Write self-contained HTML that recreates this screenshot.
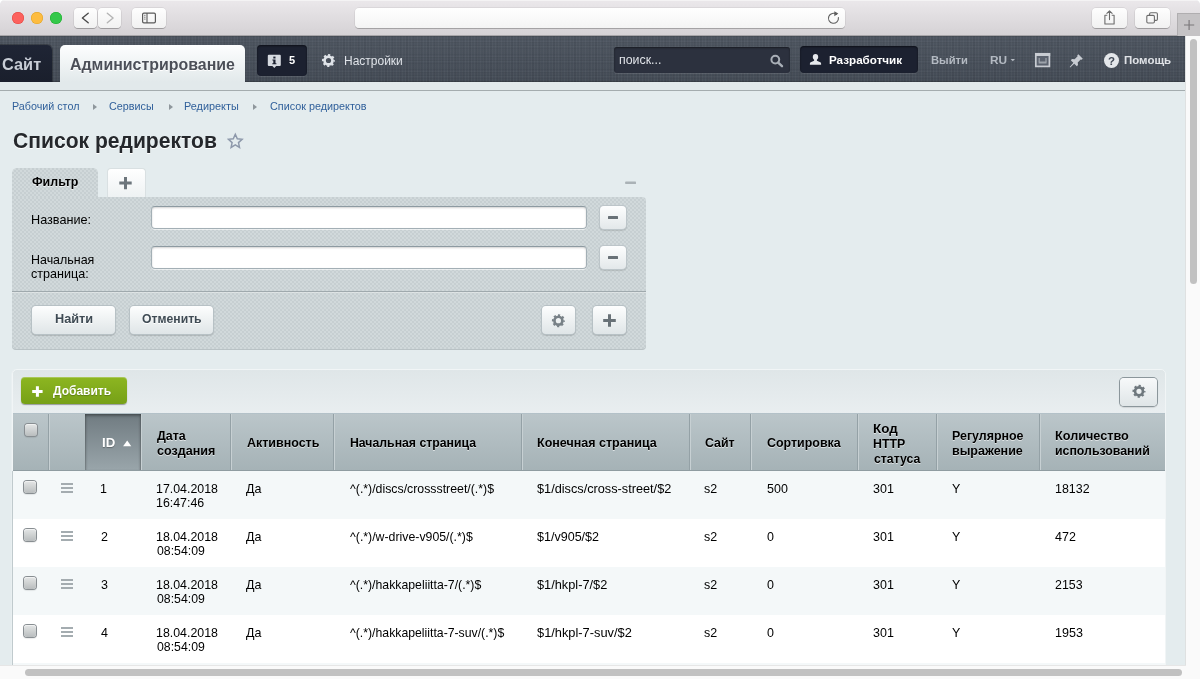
<!DOCTYPE html>
<html lang="ru">
<head>
<meta charset="utf-8">
<title>Список редиректов</title>
<style>
*{box-sizing:border-box;margin:0;padding:0}
html,body{width:1200px;height:679px;overflow:hidden;background:#fff}
body{position:relative;font-family:"Liberation Sans",sans-serif;font-size:13px;color:#000}
#win{will-change:transform;position:absolute;left:0;top:0;width:1200px;height:679px;overflow:hidden;border-radius:5px 5px 0 0;background:#e4ecee}
.t{position:absolute;white-space:nowrap;transform-origin:0 50%;display:block}
svg{position:absolute;overflow:visible}
/* ---------- browser chrome ---------- */
#chrome{position:absolute;left:0;top:0;width:1200px;height:36px;background:linear-gradient(#ebe8eb,#d5d2d5);border-bottom:1px solid #a7a5a8;box-shadow:inset 0 1px 0 #f4f3f4}
.dot{position:absolute;top:12px;width:12px;height:12px;border-radius:50%}
.cbtn{position:absolute;top:8px;height:20px;background:linear-gradient(#fefefe,#f1f1f1);border-radius:4px;box-shadow:0 0 0 .5px rgba(0,0,0,.12),0 1px 0 rgba(0,0,0,.22)}
#url{position:absolute;left:355px;top:8px;width:490px;height:20px;background:linear-gradient(#fff,#f4f4f4);border-radius:4px;box-shadow:0 0 0 .5px rgba(0,0,0,.1),0 1px 0 rgba(0,0,0,.2)}
#newtab{position:absolute;left:1177px;top:13px;width:23px;height:23px;background:#c5c3c5;border-left:1px solid #b0aeb0;border-top:1px solid #b0aeb0}
/* ---------- admin header ---------- */
#hdr{position:absolute;left:0;top:36px;width:1185px;height:46px;background-color:#48505b;background-image:repeating-linear-gradient(0deg,rgba(0,0,0,.04) 0,rgba(0,0,0,.04) 1px,transparent 1px,transparent 3px),repeating-linear-gradient(90deg,rgba(255,255,255,.03) 0,rgba(255,255,255,.03) 1px,transparent 1px,transparent 3px),repeating-linear-gradient(90deg,rgba(0,0,0,.035) 0,rgba(0,0,0,.035) 2px,transparent 2px,transparent 7px),repeating-linear-gradient(0deg,rgba(255,255,255,.025) 0,rgba(255,255,255,.025) 1px,transparent 1px,transparent 5px),linear-gradient(rgba(255,255,255,.03),rgba(0,0,0,.06));box-shadow:inset 0 1px 0 rgba(0,0,0,.1),inset 0 -1px 1px rgba(0,0,0,.22)}
#strip{z-index:1;position:absolute;left:0;top:82px;width:1185px;height:9px;background:#e2e9eb;border-bottom:1px solid #a4acae}
#tab-site{position:absolute;left:-5px;top:45px;width:57px;height:37px;background:linear-gradient(#1f2535,#1a1f2c);border-radius:5px 5px 0 0;box-shadow:0 0 0 1px rgba(0,0,0,.25)}
#tab-admin{position:absolute;left:60px;top:45px;width:185px;height:37px;background:linear-gradient(#fdfefe,#e2e9eb);border-radius:5px 5px 0 0}
#notif{position:absolute;left:257px;top:45px;width:50px;height:31px;background:#1c2130;border-radius:4px;box-shadow:0 1px 0 rgba(255,255,255,.08),inset 0 1px 2px rgba(0,0,0,.5)}
#search{position:absolute;left:614px;top:47px;width:176px;height:26px;background:#2c313e;border-radius:3px;box-shadow:0 1px 0 rgba(255,255,255,.1),inset 0 1px 2px rgba(0,0,0,.45)}
#user{position:absolute;left:800px;top:46px;width:118px;height:27px;background:#1c2130;border-radius:4px;box-shadow:0 1px 0 rgba(255,255,255,.08),inset 0 1px 2px rgba(0,0,0,.5)}
/* ---------- scrollbars ---------- */
#vscroll{position:absolute;left:1185px;top:36px;width:15px;height:643px;background:#fafafa;border-left:1px solid #dfe1e1}
#vthumb{position:absolute;left:1190px;top:39px;width:7px;height:245px;border-radius:4px;background:#c1c1c1}
#hscroll{position:absolute;left:0;top:665px;width:1186px;height:14px;background:#fafafa;border-top:1px solid #e6e6e6}
#hthumb{position:absolute;left:25px;top:669px;width:1157px;height:7px;border-radius:4px;background:#c1c1c1}
#corner{position:absolute;left:1186px;top:665px;width:15px;height:15px;background:#fafafa}
/* ---------- page ---------- */
.carr{position:absolute;top:104px;width:0;height:0;border-left:4px solid #8f979c;border-top:3.5px solid transparent;border-bottom:3.5px solid transparent}
/* filter */
.dots{background-color:#d1d9db;background-image:radial-gradient(circle at 1px 1px,rgba(110,125,130,.16) .5px,transparent 1.1px),radial-gradient(circle at 3px 3px,rgba(110,125,130,.16) .5px,transparent 1.1px);background-size:4px 4px}
#ftab{position:absolute;left:12px;top:168px;width:86px;height:30px;border-radius:5px 5px 0 0}
#fplus{position:absolute;left:106.5px;top:168px;width:39px;height:29px;background:linear-gradient(#fff,#eef2f3);border-radius:4px 4px 0 0;border:1px solid #d9e0e2;border-bottom:none}
#fbox{position:absolute;left:12px;top:197px;width:634px;height:152px;border-radius:0 4px 4px 4px;box-shadow:0 1px 0 #b9c2c5}
#fsep{position:absolute;left:12px;top:291px;width:634px;height:1px;background:#9fa9ad}
#fsep2{position:absolute;left:12px;top:292px;width:634px;height:1px;background:rgba(255,255,255,.35)}
.finput{position:absolute;left:151px;width:436px;height:23px;background:#fff;border:1px solid #a3afb5;border-top-color:#8d9aa1;border-radius:4px;box-shadow:inset 0 1px 2px rgba(0,0,0,.18),0 1px 0 rgba(255,255,255,.6)}
.fminus{position:absolute;left:600px;width:26px;height:23px;background:linear-gradient(#fdfefe,#e3e8ea);border-radius:4px;box-shadow:0 0 0 1px #bcc5c9,0 1px 1px 1px rgba(0,0,0,.12)}
.fminus i{position:absolute;left:8px;top:10px;width:10px;height:3px;background:#687177;border-radius:.5px}
.btn{position:absolute;top:306px;height:28px;background:linear-gradient(#fdfefe,#dfe5e7);border-radius:4px;box-shadow:0 0 0 1px #b7c1c5,0 1px 1px 1px rgba(0,0,0,.14)}
/* grid */
#gwrap{position:absolute;left:12px;top:369px;width:1154px;height:320px;background:linear-gradient(#dfe6e8,#e9eef0 44px);border-radius:5px 5px 0 0;border:1px solid #f1f5f6;box-shadow:-.5px 0 0 #eef2f3}
#addbtn{position:absolute;left:21px;top:377px;width:106px;height:27px;background:linear-gradient(#8db621,#76a017);border-radius:4px;box-shadow:0 1px 1px rgba(0,0,0,.35),inset 0 1px 0 rgba(255,255,255,.25)}
#gset{position:absolute;left:1120px;top:378px;width:37px;height:28px;background:linear-gradient(#f7f9fa,#dfe5e7);border-radius:4px;box-shadow:0 0 0 1px #8b969b,0 1px 1px 1px rgba(0,0,0,.1)}
#thead{position:absolute;left:13px;top:413px;width:1152px;height:58px;background:linear-gradient(#bbc6ca,#a5b2b6);box-shadow:inset 0 1px 0 #b3c1c8}
.vs{position:absolute;top:414px;width:2px;height:57px;background:linear-gradient(90deg,#94a1a6 50%,#c7d0d3 50%)}
#thid{position:absolute;left:85px;top:414px;width:56px;height:57px;background:linear-gradient(#707b81,#9aa6ab);box-shadow:inset 0 2px 3px rgba(0,0,0,.3),inset 1px 0 2px rgba(0,0,0,.15),inset -1px 0 2px rgba(0,0,0,.15)}
#thline{position:absolute;left:13px;top:470px;width:1152px;height:1px;background:#8f9ca1}
.row{position:absolute;left:13px;width:1152px;height:48px}
.row.odd{background:#f4f8f9}
.row.even{background:#fff}
.cb{position:absolute;width:12px;height:12px;border-radius:3px;background:linear-gradient(#e4e6e6,#b9bdbe);box-shadow:0 0 0 1px #888e92,0 1px 1px 1px rgba(0,0,0,.08),inset 0 1px 0 rgba(255,255,255,.5)}
.ham{position:absolute;left:61px;width:12px;height:10px;background:linear-gradient(#a4acb0 2px,transparent 2px,transparent 4px,#a4acb0 4px,#a4acb0 6px,transparent 6px,transparent 8px,#a4acb0 8px)}
</style>
</head>
<body>
<div id="win">
<div id="chrome">
  <div class="dot" style="left:12px;background:#fc615d;box-shadow:inset 0 0 0 .5px #e0443e"></div>
  <div class="dot" style="left:31px;background:#fdbc40;box-shadow:inset 0 0 0 .5px #dea123"></div>
  <div class="dot" style="left:50px;background:#34c84a;box-shadow:inset 0 0 0 .5px #1aab29"></div>
  <div class="cbtn" style="left:74px;width:23px"></div>
  <div class="cbtn" style="left:98px;width:23px"></div>
  <div class="cbtn" style="left:132px;width:34px"></div>
  <div id="url"></div>
  <div class="cbtn" style="left:1092px;width:35px"></div>
  <div class="cbtn" style="left:1135px;width:35px"></div>
  <div id="newtab"></div>
  <svg style="left:0;top:0" width="1200" height="36" viewBox="0 0 1200 36" fill="none">
<path d="M88.2 13.3 L82.4 18 L88.2 22.7" stroke="#4a4a4a" stroke-width="1.4" stroke-linecap="round" stroke-linejoin="round"/>
<path d="M107.3 13.3 L113.1 18 L107.3 22.7" stroke="#b4b4b4" stroke-width="1.4" stroke-linecap="round" stroke-linejoin="round"/>
<rect x="142.6" y="13.1" width="12.8" height="9.8" rx="1.3" stroke="#5a5a5a" stroke-width="1.2"/>
<path d="M147 13.1 V22.9" stroke="#5a5a5a" stroke-width="1.1"/>
<path d="M144 15.3h1.6M144 17.2h1.6M144 19.1h1.6" stroke="#6a6a6a" stroke-width=".8"/>
<path d="M836.6 14.4 A5 5 0 1 0 838.4 17.6" stroke="#5e5e5e" stroke-width="1.1" stroke-linecap="round"/>
<path d="M834.3 11.2 L838.3 13.6 L834.3 16.2 Z" fill="#5e5e5e"/>
<path d="M1107.3 15.2 H1104.9 V24 H1114.1 V15.2 H1111.7" stroke="#6b6b6b" stroke-width="1.1" stroke-linejoin="round"/>
<path d="M1109.5 11 V19.6 M1106.9 13.4 L1109.5 10.8 L1112.1 13.4" stroke="#6b6b6b" stroke-width="1.1" stroke-linecap="round" stroke-linejoin="round"/>
<rect x="1146.8" y="15.4" width="7.6" height="7.6" rx="1.2" stroke="#6b6b6b" stroke-width="1.1"/>
<path d="M1149.6 15.2 V13.9 Q1149.6 12.7 1150.8 12.7 H1156.2 Q1157.4 12.7 1157.4 13.9 V19.2 Q1157.4 20.4 1156.2 20.4 H1154.6" stroke="#6b6b6b" stroke-width="1.1"/>
<path d="M1184 25 H1194.2 M1189.1 19.9 V30.1" stroke="#7b797b" stroke-width="1.2"/>
</svg>

</div>
<div id="hdr"></div>
<div id="strip"></div>
<div id="tab-site"></div>
<div id="tab-admin"></div>
<div id="notif"></div>
<div id="search"></div>
<div id="user"></div>
<svg style="left:0;top:36px" width="1186" height="46" viewBox="0 36 1186 46">
<!-- notification -->
<path d="M268.8 54.8 H279.8 Q280.8 54.8 280.8 55.8 V65 Q280.8 66 279.8 66 H276.2 L274.3 67.9 L272.4 66 H268.8 Q267.8 66 267.8 65 V55.8 Q267.8 54.8 268.8 54.8 Z" fill="#d6dae0"/>
<rect x="273.3" y="56.6" width="2.2" height="1.9" fill="#1c2130"/>
<path d="M272.4 59.6 H275.5 V63.3 H276.4 V64.3 H272.3 V63.3 H273.3 V60.6 H272.4 Z" fill="#1c2130"/>
<!-- gear -->
<g transform="translate(328.5 60.5) scale(1.0)" fill="none" stroke="#dfe3e8"><circle r="3.95" stroke-width="2.7"/><circle r="5.55" stroke-width="1.9" stroke-dasharray="2.18 2.18" stroke-dashoffset="1.09" stroke-linecap="butt"/></g>
<!-- magnifier -->
<circle cx="775.3" cy="59.6" r="3.9" fill="none" stroke="#a9afb7" stroke-width="2"/>
<path d="M778.2 62.6 L782 66.2" stroke="#a9afb7" stroke-width="2.4" stroke-linecap="round"/>
<!-- user -->
<path d="M815.5 54 a2.7 2.9 0 0 1 2.7 2.9 c0 1.3 -.7 2.2 -1.3 2.8 v1 l3.4 1.6 q.8 .4 .8 1.3 v1.1 h-11.2 v-1.1 q0 -.9 .8 -1.3 l3.4 -1.6 v-1 c-.6 -.6 -1.3 -1.5 -1.3 -2.8 a2.7 2.9 0 0 1 2.7 -2.9 Z" fill="#e6e8ec"/>
<!-- RU arrow -->
<path d="M1010.6 59 h4.4 l-2.2 2.3 Z" fill="#b4bac2"/>
<!-- window icon -->
<rect x="1035.8" y="53.8" width="13.6" height="12.6" fill="#5b626e" stroke="#c8ccd2" stroke-width="1.7"/>
<rect x="1035" y="53" width="15.2" height="3" fill="#c8ccd2"/>
<rect x="1038.6" y="61.5" width="8" height="2" fill="#9da3ab"/>
<rect x="1038.6" y="58" width="1.2" height="4" fill="#9da3ab"/><rect x="1045.4" y="58" width="1.2" height="4" fill="#9da3ab"/>
<!-- pin -->
<g fill="#c8ccd2"><path d="M1078.4 54.3 l4.4 4.4 -1.2 1.1 -.9 -.4 -3 3 .3 2.6 -1.2 1.2 -6 -6 1.2 -1.2 2.6 .3 3 -3 -.4 -.9 Z"/><path d="M1073.6 62.6 l.9 .9 -4.3 3.9 -.5 -.5 Z"/></g>
<!-- help -->
<circle cx="1111.5" cy="60.5" r="7.5" fill="#e4e7ea"/>
<text x="1111.5" y="64.6" text-anchor="middle" font-family="Liberation Sans, sans-serif" font-weight="bold" font-size="11.5" fill="#414955">?</text>
</svg>


<div class="carr" style="left:93px"></div>
<div class="carr" style="left:168.5px"></div>
<div class="carr" style="left:253px"></div>

<div id="ftab" class="dots"></div>
<div id="fplus"></div>
<div id="fbox" class="dots"></div>
<div id="fsep"></div><div id="fsep2"></div>
<div class="finput" style="top:206px"></div>
<div class="fminus" style="top:206px"><i></i></div>
<div class="finput" style="top:246px"></div>
<div class="fminus" style="top:246px"><i></i></div>
<div class="btn" style="left:32px;width:83px"></div>
<div class="btn" style="left:130px;width:83px"></div>
<div class="btn" style="left:542px;width:33px"></div>
<div class="btn" style="left:593px;width:33px"></div>

<div id="gwrap"></div>
<div id="addbtn"></div>
<div id="gset"></div>
<div id="thead"></div>
<div class="vs" style="left:48px"></div>
<div class="vs" style="left:85px"></div>
<div class="vs" style="left:140px"></div>
<div class="vs" style="left:230px"></div>
<div class="vs" style="left:333px"></div>
<div class="vs" style="left:521px"></div>
<div class="vs" style="left:689px"></div>
<div class="vs" style="left:750px"></div>
<div class="vs" style="left:857px"></div>
<div class="vs" style="left:936px"></div>
<div class="vs" style="left:1039px"></div>
<div class="cb" style="left:24.5px;top:424px"></div>
<div class="row odd" style="top:471px"></div>
<div class="cb" style="left:24px;top:481.3px"></div><div class="ham" style="top:483px"></div>
<div class="row even" style="top:519px"></div>
<div class="cb" style="left:24px;top:529.3px"></div><div class="ham" style="top:531px"></div>
<div class="row odd" style="top:567px"></div>
<div class="cb" style="left:24px;top:577.3px"></div><div class="ham" style="top:579px"></div>
<div class="row even" style="top:615px"></div>
<div class="cb" style="left:24px;top:625.3px"></div><div class="ham" style="top:627px"></div>
<div class="row odd" style="top:663px;height:16px"></div>
<div style="position:absolute;left:12px;top:471px;width:1px;height:200px;background:#c0cacd"></div>
<div id="thid"></div>
<div id="thline"></div>
<svg style="left:0;top:90px" width="1186" height="400" viewBox="0 90 1186 400">
<!-- star -->
<path d="M235.3 134.3 l2 4.5 4.8 .5 -3.6 3.3 1 4.8 -4.2 -2.5 -4.2 2.5 1 -4.8 -3.6 -3.3 4.8 -.5 Z" fill="none" stroke="#8e99ab" stroke-width="1.5" stroke-linejoin="miter"/>
<!-- filter tab plus -->
<path d="M119.3 183.1 h12.4 M125.5 176.9 v12.4" stroke="#6c757b" stroke-width="3"/>
<!-- collapse -->
<rect x="625.2" y="181.6" width="10.8" height="2.4" rx=".6" fill="#aab2b6"/>
<!-- filter gear -->
<g transform="translate(558.4 320.7) scale(1.0)" fill="none" stroke="#788187"><circle r="3.95" stroke-width="2.7"/><circle r="5.55" stroke-width="1.9" stroke-dasharray="2.18 2.18" stroke-dashoffset="1.09" stroke-linecap="butt"/></g>
<!-- filter plus btn -->
<path d="M603.2 320.5 h12.6 M609.5 314.2 v12.6" stroke="#687177" stroke-width="3"/>
<!-- add plus -->
<path d="M32.2 391.5 h10.4 M37.4 386.3 v10.4" stroke="#fff" stroke-width="3"/>
<!-- grid settings gear -->
<g transform="translate(1139 391.3) scale(1.0)" fill="none" stroke="#6f787e"><circle r="3.95" stroke-width="2.7"/><circle r="5.55" stroke-width="1.9" stroke-dasharray="2.18 2.18" stroke-dashoffset="1.09" stroke-linecap="butt"/></g>
<!-- sort triangle -->
<path d="M123.1 446.2 h8.2 l-4.1 -5.7 Z" fill="#fff"/>
</svg>

<span class="t" style="left:1.83px;top:54.08px;font-size:16.5px;line-height:20px;font-weight:bold;color:#c8cdd6;transform:scaleX(0.9901)">Сайт</span>
<span class="t" style="left:70.10px;top:54.08px;font-size:16.5px;line-height:20px;font-weight:bold;color:#4b4f58;text-shadow:0 1px 0 #fff;transform:scaleX(0.9653)">Администрирование</span>
<span class="t" style="left:289.16px;top:53.99px;font-size:11px;line-height:13px;font-weight:bold;color:#fff;transform:scaleX(1.0049)">5</span>
<span class="t" style="left:344.02px;top:54.04px;font-size:12px;line-height:14px;color:#dfe3e8;transform:scaleX(0.9996)">Настройки</span>
<span class="t" style="left:618.84px;top:53.14px;font-size:12px;line-height:14px;color:#e0e3e8;transform:scaleX(1.0300)">поиск...</span>
<span class="t" style="left:828.92px;top:53.32px;font-size:11.5px;line-height:14px;font-weight:bold;color:#fff;transform:scaleX(1.0126)">Разработчик</span>
<span class="t" style="left:931.25px;top:53.32px;font-size:11.5px;line-height:14px;font-weight:bold;color:#b4bac2;transform:scaleX(0.9771)">Выйти</span>
<span class="t" style="left:990.21px;top:53.32px;font-size:11.5px;line-height:14px;font-weight:bold;color:#b4bac2;transform:scaleX(1.0300)">RU</span>
<span class="t" style="left:1124.03px;top:53.32px;font-size:11.5px;line-height:14px;font-weight:bold;color:#dfe2e6;transform:scaleX(0.9969)">Помощь</span>
<span class="t" style="left:11.72px;top:100.29px;font-size:11px;line-height:13px;color:#2f5f9a;transform:scaleX(0.9765)">Рабочий стол</span>
<span class="t" style="left:109.45px;top:100.29px;font-size:11px;line-height:13px;color:#2f5f9a;transform:scaleX(0.9807)">Сервисы</span>
<span class="t" style="left:184.41px;top:100.29px;font-size:11px;line-height:13px;color:#2f5f9a;transform:scaleX(0.9880)">Редиректы</span>
<span class="t" style="left:269.95px;top:100.29px;font-size:11px;line-height:13px;color:#2f5f9a;transform:scaleX(0.9823)">Список редиректов</span>
<span class="t" style="left:12.54px;top:127.88px;font-size:22px;line-height:26px;font-weight:bold;color:#25282c;text-shadow:0 1px 0 #fff;transform:scaleX(0.9582)">Список редиректов</span>
<span class="t" style="left:32.07px;top:174.20px;font-size:13px;line-height:16px;font-weight:bold;color:#000;text-shadow:0 1px 0 rgba(255,255,255,.7);transform:scaleX(0.9575)">Фильтр</span>
<span class="t" style="left:30.66px;top:211.70px;font-size:13px;line-height:16px;color:#000;transform:scaleX(0.9722)">Название:</span>
<span class="t" style="left:30.58px;top:251.50px;font-size:13px;line-height:16px;color:#000;transform:scaleX(0.9568)">Начальная</span>
<span class="t" style="left:31.07px;top:265.50px;font-size:13px;line-height:16px;color:#000;transform:scaleX(0.9671)">страница:</span>
<span class="t" style="left:54.75px;top:310.50px;font-size:13px;line-height:16px;font-weight:bold;color:#3f4b54;text-shadow:0 1px 0 #fff;transform:scaleX(0.9786)">Найти</span>
<span class="t" style="left:141.50px;top:310.50px;font-size:13px;line-height:16px;font-weight:bold;color:#3f4b54;text-shadow:0 1px 0 #fff;transform:scaleX(0.9383)">Отменить</span>
<span class="t" style="left:53.19px;top:382.50px;font-size:13px;line-height:16px;font-weight:bold;color:#fff;text-shadow:0 1px 1px rgba(0,0,0,.25);transform:scaleX(0.9228)">Добавить</span>
<span class="t" style="left:101.61px;top:434.60px;font-size:13px;line-height:16px;font-weight:bold;color:#fff;text-shadow:0 1px 1px rgba(0,0,0,.3);transform:scaleX(1.0186)">ID</span>
<span class="t" style="left:157.39px;top:428.25px;font-size:13px;line-height:16px;font-weight:bold;color:#000;text-shadow:0 1px 0 rgba(255,255,255,.6);transform:scaleX(0.9565)">Дата</span>
<span class="t" style="left:157.01px;top:443.25px;font-size:13px;line-height:16px;font-weight:bold;color:#000;text-shadow:0 1px 0 rgba(255,255,255,.6);transform:scaleX(0.9668)">создания</span>
<span class="t" style="left:246.69px;top:435.00px;font-size:13px;line-height:16px;font-weight:bold;color:#000;text-shadow:0 1px 0 rgba(255,255,255,.6);transform:scaleX(0.9586)">Активность</span>
<span class="t" style="left:350.18px;top:435.00px;font-size:13px;line-height:16px;font-weight:bold;color:#000;text-shadow:0 1px 0 rgba(255,255,255,.6);transform:scaleX(0.9431)">Начальная страница</span>
<span class="t" style="left:537.16px;top:435.00px;font-size:13px;line-height:16px;font-weight:bold;color:#000;text-shadow:0 1px 0 rgba(255,255,255,.6);transform:scaleX(0.9623)">Конечная страница</span>
<span class="t" style="left:705.24px;top:435.00px;font-size:13px;line-height:16px;font-weight:bold;color:#000;text-shadow:0 1px 0 rgba(255,255,255,.6);transform:scaleX(0.9507)">Сайт</span>
<span class="t" style="left:766.99px;top:435.00px;font-size:13px;line-height:16px;font-weight:bold;color:#000;text-shadow:0 1px 0 rgba(255,255,255,.6);transform:scaleX(0.9561)">Сортировка</span>
<span class="t" style="left:872.85px;top:420.75px;font-size:13px;line-height:16px;font-weight:bold;color:#000;text-shadow:0 1px 0 rgba(255,255,255,.6);transform:scaleX(1.0300)">Код</span>
<span class="t" style="left:873.17px;top:436.00px;font-size:13px;line-height:16px;font-weight:bold;color:#000;text-shadow:0 1px 0 rgba(255,255,255,.6);transform:scaleX(0.9501)">HTTP</span>
<span class="t" style="left:873.52px;top:451.00px;font-size:13px;line-height:16px;font-weight:bold;color:#000;text-shadow:0 1px 0 rgba(255,255,255,.6);transform:scaleX(0.9462)">статуса</span>
<span class="t" style="left:952.17px;top:428.25px;font-size:13px;line-height:16px;font-weight:bold;color:#000;text-shadow:0 1px 0 rgba(255,255,255,.6);transform:scaleX(0.9552)">Регулярное</span>
<span class="t" style="left:952.13px;top:443.25px;font-size:13px;line-height:16px;font-weight:bold;color:#000;text-shadow:0 1px 0 rgba(255,255,255,.6);transform:scaleX(0.9618)">выражение</span>
<span class="t" style="left:1055.40px;top:428.25px;font-size:13px;line-height:16px;font-weight:bold;color:#000;text-shadow:0 1px 0 rgba(255,255,255,.6);transform:scaleX(0.9746)">Количество</span>
<span class="t" style="left:1055.40px;top:443.25px;font-size:13px;line-height:16px;font-weight:bold;color:#000;text-shadow:0 1px 0 rgba(255,255,255,.6);transform:scaleX(0.9480)">использований</span>
<span class="t" style="left:100.35px;top:480.50px;font-size:13px;line-height:16px;color:#000;transform:scaleX(0.9600)">1</span>
<span class="t" style="left:156.06px;top:480.50px;font-size:13px;line-height:16px;color:#000;transform:scaleX(0.9526)">17.04.2018</span>
<span class="t" style="left:156.06px;top:494.50px;font-size:13px;line-height:16px;color:#000;transform:scaleX(0.9533)">16:47:46</span>
<span class="t" style="left:246.16px;top:480.50px;font-size:13px;line-height:16px;color:#000;transform:scaleX(0.9600)">Да</span>
<span class="t" style="left:349.94px;top:480.50px;font-size:13px;line-height:16px;color:#000;transform:scaleX(0.9473)">^(.*)/discs/crossstreet/(.*)$</span>
<span class="t" style="left:536.86px;top:480.50px;font-size:13px;line-height:16px;color:#000;transform:scaleX(0.9782)">$1/discs/cross-street/$2</span>
<span class="t" style="left:704.15px;top:480.50px;font-size:13px;line-height:16px;color:#000;transform:scaleX(0.9600)">s2</span>
<span class="t" style="left:766.50px;top:480.50px;font-size:13px;line-height:16px;color:#000;transform:scaleX(0.9600)">500</span>
<span class="t" style="left:872.52px;top:480.50px;font-size:13px;line-height:16px;color:#000;transform:scaleX(0.9600)">301</span>
<span class="t" style="left:951.73px;top:480.50px;font-size:13px;line-height:16px;color:#000;transform:scaleX(0.9600)">Y</span>
<span class="t" style="left:1054.75px;top:480.50px;font-size:13px;line-height:16px;color:#000;transform:scaleX(0.9564)">18132</span>
<span class="t" style="left:100.67px;top:528.50px;font-size:13px;line-height:16px;color:#000;transform:scaleX(0.9600)">2</span>
<span class="t" style="left:156.06px;top:528.50px;font-size:13px;line-height:16px;color:#000;transform:scaleX(0.9526)">18.04.2018</span>
<span class="t" style="left:156.52px;top:542.50px;font-size:13px;line-height:16px;color:#000;transform:scaleX(0.9448)">08:54:09</span>
<span class="t" style="left:246.16px;top:528.50px;font-size:13px;line-height:16px;color:#000;transform:scaleX(0.9600)">Да</span>
<span class="t" style="left:349.94px;top:528.50px;font-size:13px;line-height:16px;color:#000;transform:scaleX(0.9470)">^(.*)/w-drive-v905/(.*)$</span>
<span class="t" style="left:536.87px;top:528.50px;font-size:13px;line-height:16px;color:#000;transform:scaleX(0.9640)">$1/v905/$2</span>
<span class="t" style="left:704.15px;top:528.50px;font-size:13px;line-height:16px;color:#000;transform:scaleX(0.9600)">s2</span>
<span class="t" style="left:766.51px;top:528.50px;font-size:13px;line-height:16px;color:#000;transform:scaleX(0.9600)">0</span>
<span class="t" style="left:872.52px;top:528.50px;font-size:13px;line-height:16px;color:#000;transform:scaleX(0.9600)">301</span>
<span class="t" style="left:951.73px;top:528.50px;font-size:13px;line-height:16px;color:#000;transform:scaleX(0.9600)">Y</span>
<span class="t" style="left:1055.41px;top:528.50px;font-size:13px;line-height:16px;color:#000;transform:scaleX(0.9600)">472</span>
<span class="t" style="left:100.82px;top:576.50px;font-size:13px;line-height:16px;color:#000;transform:scaleX(0.9600)">3</span>
<span class="t" style="left:156.06px;top:576.50px;font-size:13px;line-height:16px;color:#000;transform:scaleX(0.9526)">18.04.2018</span>
<span class="t" style="left:156.52px;top:590.50px;font-size:13px;line-height:16px;color:#000;transform:scaleX(0.9448)">08:54:09</span>
<span class="t" style="left:246.16px;top:576.50px;font-size:13px;line-height:16px;color:#000;transform:scaleX(0.9600)">Да</span>
<span class="t" style="left:349.94px;top:576.50px;font-size:13px;line-height:16px;color:#000;transform:scaleX(0.9440)">^(.*)/hakkapeliitta-7/(.*)$</span>
<span class="t" style="left:536.86px;top:576.50px;font-size:13px;line-height:16px;color:#000;transform:scaleX(0.9822)">$1/hkpl-7/$2</span>
<span class="t" style="left:704.15px;top:576.50px;font-size:13px;line-height:16px;color:#000;transform:scaleX(0.9600)">s2</span>
<span class="t" style="left:766.51px;top:576.50px;font-size:13px;line-height:16px;color:#000;transform:scaleX(0.9600)">0</span>
<span class="t" style="left:872.52px;top:576.50px;font-size:13px;line-height:16px;color:#000;transform:scaleX(0.9600)">301</span>
<span class="t" style="left:951.73px;top:576.50px;font-size:13px;line-height:16px;color:#000;transform:scaleX(0.9600)">Y</span>
<span class="t" style="left:1055.08px;top:576.50px;font-size:13px;line-height:16px;color:#000;transform:scaleX(0.9532)">2153</span>
<span class="t" style="left:101.01px;top:624.50px;font-size:13px;line-height:16px;color:#000;transform:scaleX(0.9600)">4</span>
<span class="t" style="left:156.06px;top:624.50px;font-size:13px;line-height:16px;color:#000;transform:scaleX(0.9526)">18.04.2018</span>
<span class="t" style="left:156.52px;top:638.50px;font-size:13px;line-height:16px;color:#000;transform:scaleX(0.9448)">08:54:09</span>
<span class="t" style="left:246.16px;top:624.50px;font-size:13px;line-height:16px;color:#000;transform:scaleX(0.9600)">Да</span>
<span class="t" style="left:349.94px;top:624.50px;font-size:13px;line-height:16px;color:#000;transform:scaleX(0.9429)">^(.*)/hakkapeliitta-7-suv/(.*)$</span>
<span class="t" style="left:536.86px;top:624.50px;font-size:13px;line-height:16px;color:#000;transform:scaleX(0.9862)">$1/hkpl-7-suv/$2</span>
<span class="t" style="left:704.15px;top:624.50px;font-size:13px;line-height:16px;color:#000;transform:scaleX(0.9600)">s2</span>
<span class="t" style="left:766.51px;top:624.50px;font-size:13px;line-height:16px;color:#000;transform:scaleX(0.9600)">0</span>
<span class="t" style="left:872.52px;top:624.50px;font-size:13px;line-height:16px;color:#000;transform:scaleX(0.9600)">301</span>
<span class="t" style="left:951.73px;top:624.50px;font-size:13px;line-height:16px;color:#000;transform:scaleX(0.9600)">Y</span>
<span class="t" style="left:1054.74px;top:624.50px;font-size:13px;line-height:16px;color:#000;transform:scaleX(0.9650)">1953</span>
<div id="vscroll"></div><div id="vthumb"></div>
<div id="hscroll"></div><div id="hthumb"></div><div id="corner"></div>
</div>
</body>
</html>
